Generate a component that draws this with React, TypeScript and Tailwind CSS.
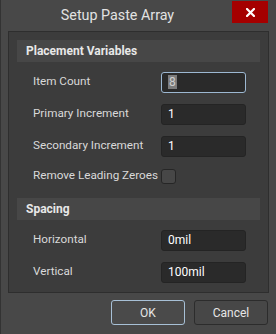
import React from 'react'

const font = { fontFamily: 'Roboto, "Noto Sans", sans-serif' }

function Field({ label, value, focused }: { label: string; value: string; focused?: boolean }) {
  return (
    <div className="flex h-[20px] items-center">
      <div className="w-[144px] pl-[16px] text-[11.7px] whitespace-nowrap text-[#d9d9d9]">{label}</div>
      <div
        className={
          focused
            ? 'flex h-[21px] w-[85px] items-center rounded-[3px] border border-[#9db8d2] bg-[#2a2a2a] pl-[6px] text-[12px] text-white'
            : 'flex h-[21px] w-[85px] items-center rounded-[3px] border border-[#242424] bg-[#2a2a2a] pl-[6px] text-[12px] text-white'
        }
      >
        {focused ? <span className="bg-[#7c7c7c] px-[1px] leading-[14px] text-[#cfcfcf]">{value}</span> : value}
      </div>
    </div>
  )
}

function SectionHeader({ title }: { title: string }) {
  return (
    <div className="flex h-[22px] items-center bg-[#474747] pl-[9px] text-[12px] font-bold text-[#e8e8e8]">
      {title}
    </div>
  )
}

export default function App() {
  return (
    <div className="h-[334px] w-[276px] overflow-hidden border-l border-[#333] bg-[#484848]" style={font}>
      <div className="relative flex h-[31px] items-center justify-center pr-[42px]">
        <span className="text-[14.3px] text-[#e2e2e2]">Setup Paste Array</span>
        <div className="absolute top-[1px] left-[231px] flex h-[22px] w-[36px] items-center justify-center bg-[#a50000]">
          <svg width="9" height="9" viewBox="0 0 9 9">
            <path d="M1 1 L8 8 M8 1 L1 8" stroke="#ffffff" strokeWidth="2.2" strokeLinecap="square" />
          </svg>
        </div>
      </div>

      <div className="ml-[7px] w-[261px] border border-[#2e2e2e] bg-[#3c3c3c] px-[8px] pt-[8px] pb-[10px]">
        <SectionHeader title="Placement Variables" />
        <div className="mt-[10px] flex flex-col gap-[12px]">
          <Field label="Item Count" value="8" focused />
          <Field label="Primary Increment" value="1" />
          <Field label="Secondary Increment" value="1" />
        </div>
        <div className="mt-[10px] flex h-[20px] items-center">
          <div className="w-[144px] pl-[16px] text-[11.7px] whitespace-nowrap text-[#d9d9d9]">Remove Leading Zeroes</div>
          <div className="h-[15px] w-[15px] rounded-[3px] border border-[#262626] bg-[#474747]" />
        </div>
        <div className="mt-[12px]">
          <SectionHeader title="Spacing" />
        </div>
        <div className="mt-[10px] flex flex-col gap-[12px]">
          <Field label="Horizontal" value="0mil" />
          <Field label="Vertical" value="100mil" />
        </div>
      </div>

      <div className="mt-[7px] flex justify-end gap-[9px] pr-[8px]">
        <button className="flex h-[25px] w-[74px] items-center justify-center rounded-[3px] border border-[#a7c0d6] bg-[#4a4a4a] text-[12px] text-[#e6e6e6]">
          OK
        </button>
        <button className="flex h-[25px] w-[74px] items-center justify-center rounded-[3px] border border-[#2c2c2c] bg-[#474747] text-[12px] text-[#e6e6e6]">
          Cancel
        </button>
      </div>
    </div>
  )
}
